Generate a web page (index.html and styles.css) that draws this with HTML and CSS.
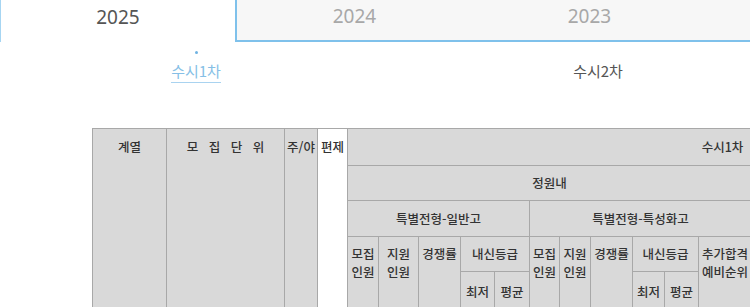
FILE: index.html
```html
<!DOCTYPE html>
<html lang="ko">
<head>
<meta charset="utf-8">
<title>수시 입시결과</title>
<link rel="stylesheet" href="styles.css">
</head>
<body>
<nav class="year-tabs">
  <a class="year-tab is-active" href="#">2025</a>
  <a class="year-tab" href="#">2024</a>
  <a class="year-tab" href="#">2023</a>
</nav>

<nav class="round-tabs">
  <a class="round-tab is-active" href="#"><span>수시1차</span></a>
  <a class="round-tab" href="#"><span>수시2차</span></a>
</nav>

<div class="result-wrap">
  <table class="result-table">
    <colgroup>
      <col class="c-field">
      <col class="c-unit">
      <col class="c-time">
      <col class="c-form">
      <col class="c-31"><col class="c-40"><col class="c-42"><col class="c-34"><col class="c-35">
      <col class="c-30"><col class="c-31"><col class="c-42"><col class="c-32"><col class="c-34"><col class="c-53">
      <col class="c-extra">
    </colgroup>
    <thead>
      <tr class="r1">
        <th rowspan="5" class="top">계열</th>
        <th rowspan="5" class="top spaced">모 집 단 위</th>
        <th rowspan="5" class="top">주/야</th>
        <th rowspan="5" class="top white">편제</th>
        <th colspan="12">수시1차</th>
      </tr>
      <tr class="r2">
        <th colspan="11">정원내</th>
        <th rowspan="4" class="top"></th>
      </tr>
      <tr class="r3">
        <th colspan="5">특별전형-일반고</th>
        <th colspan="6">특별전형-특성화고</th>
      </tr>
      <tr class="r4">
        <th rowspan="2" class="top">모집<br>인원</th>
        <th rowspan="2" class="top">지원<br>인원</th>
        <th rowspan="2" class="top">경쟁률</th>
        <th colspan="2">내신등급</th>
        <th rowspan="2" class="top">모집<br>인원</th>
        <th rowspan="2" class="top">지원<br>인원</th>
        <th rowspan="2" class="top">경쟁률</th>
        <th colspan="2">내신등급</th>
        <th rowspan="2" class="top">추가합격<br>예비순위</th>
      </tr>
      <tr class="r5">
        <th>최저</th>
        <th>평균</th>
        <th>최저</th>
        <th>평균</th>
      </tr>
    </thead>
  </table>
</div>
</body>
</html>
```

FILE: styles.css
```css
html, body {
  margin: 0;
  padding: 0;
  background: #fff;
  overflow: hidden;
}

body {
  width: 750px;
  font-family: "Noto Sans", "Noto Sans CJK KR", sans-serif;
}

a {
  text-decoration: none;
}

/* year selector */
.year-tabs {
  display: flex;
  height: 42px;
}

.year-tab {
  box-sizing: border-box;
  flex-shrink: 0;
  width: 237px;
  height: 42px;
  display: flex;
  align-items: center;
  justify-content: center;
  padding-bottom: 8px;
  font-size: 19px;
  color: #a8a8a8;
  background: #f7f7f7;
  border-bottom: 2px solid #7fc1eb;
}

.year-tab.is-active {
  width: 237px;
  color: #555;
  background: #fff;
  border-left: 1px solid #a6d5f2;
  border-right: 2px solid #7fc1eb;
  border-bottom: 0;
}

.year-tab + .year-tab {
  width: 235px;
}

.year-tabs::after {
  content: "";
  flex: 1;
  background: #f7f7f7;
  border-bottom: 2px solid #7fc1eb;
}

/* round selector */
.round-tabs {
  display: flex;
  margin-left: -5px;
  height: 86px;
}

.round-tab {
  position: relative;
  flex-shrink: 0;
  width: 402px;
  display: flex;
  justify-content: center;
  align-items: flex-start;
  padding-top: 18px;
  box-sizing: border-box;
  font-family: "Noto Sans CJK KR", sans-serif;
  font-size: 15px;
  color: #555;
}

.round-tab span {
  display: block;
  height: 22px;
  line-height: 21px;
}

.round-tab.is-active {
  color: #86bfe6;
}

.round-tab.is-active span {
  border-bottom: 1px solid #a9d3f0;
}

.round-tab.is-active::before {
  content: "";
  position: absolute;
  top: 9px;
  left: 50%;
  width: 3px;
  height: 3px;
  margin-left: -1px;
  border-radius: 50%;
  background: #6fb2e2;
}

/* result table */
.result-wrap {
  padding-left: 92px;
}

.result-table {
  width: 1005px;
  table-layout: fixed;
  border-collapse: collapse;
  font-family: "Noto Sans CJK KR", sans-serif;
  font-size: 12.5px;
  font-weight: 500;
  color: #333;
}

.result-table th {
  background: #d9d9d9;
  border: 1px solid #a8a8a8;
  padding: 0;
  text-align: center;
  vertical-align: middle;
  line-height: 18px;
  font-weight: 500;
  overflow: hidden;
  white-space: nowrap;
}

.result-table th.top {
  vertical-align: top;
  padding-top: 8px;
}

.result-table thead tr.r1 th.top {
  padding-top: 9px;
}

.result-table th.spaced {
  word-spacing: 7px;
}

.result-table th.white {
  background: #fff;
}

.result-table tr.r1 { height: 37px; }
.result-table tr.r2 { height: 35px; }
.result-table tr.r3 { height: 36px; }
.result-table tr.r4 { height: 35px; }
.result-table tr.r5 { height: 42px; }

.result-table tr.r5 th {
  vertical-align: top;
  padding-top: 11px;
}

.c-field { width: 74px; }
.c-unit { width: 118px; }
.c-time { width: 33px; }
.c-form { width: 30px; }
.c-30 { width: 30px; }
.c-31 { width: 31px; }
.c-32 { width: 32px; }
.c-34 { width: 34px; }
.c-35 { width: 35px; }
.c-40 { width: 40px; }
.c-42 { width: 42px; }
.c-53 { width: 53px; }
.c-extra { width: 346px; }
```
